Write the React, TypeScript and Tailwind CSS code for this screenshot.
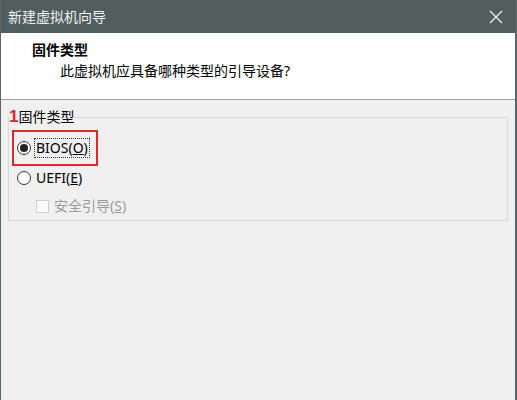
export default function App() {
  return (
    <div
      className="flex h-[400px] w-[517px] flex-col border-l border-r-2 border-[#5b6565] bg-[#f0f0f0] text-[14px] text-black"
      style={{ fontFamily: '"Noto Sans", "Noto Sans CJK SC", sans-serif' }}
    >
      {/* title bar */}
      <div className="flex h-[33px] shrink-0 items-center justify-between bg-[#525e5e] pl-[7px] pr-[12px] text-[#eef1f1]">
        <span className="leading-5">新建虚拟机向导</span>
        <svg width="14" height="14" viewBox="0 0 14 14" className="stroke-[#f4f6f6]">
          <path d="M1 1 L13 13 M13 1 L1 13" strokeWidth="1.2" fill="none" />
        </svg>
      </div>

      {/* header */}
      <div className="h-[67px] shrink-0 border-b border-[#a0a0a0] bg-white pl-[31px] pt-[7px]">
        <div className="font-bold leading-5">固件类型</div>
        <div className="mt-px pl-[28px] leading-5">此虚拟机应具备哪种类型的引导设备?</div>
      </div>

      {/* body */}
      <div className="px-[7px] pt-[7px]">
        <fieldset className="border border-[#d9d9d9] pb-[4px]">
          <legend className="leading-5">
            <span className="text-[17px] font-bold text-[#e0262e]" style={{ fontFamily: '"Liberation Sans", sans-serif' }}>1</span>
            固件类型
          </legend>

          <div className="ml-[3px] mt-[3px] flex h-[36px] w-[86px] items-center border-2 border-[#dd2a30] pl-[3px]">
            <Radio checked />
            <span className="ml-[3px] border border-dotted border-[#333] px-px leading-[18px]">
              BIOS(<u>O</u>)
            </span>
          </div>

          <div className="mt-[2px] flex h-[20px] items-center pl-[8px]">
            <Radio />
            <span className="ml-[5px] leading-5">
              UEFI(<u>E</u>)
            </span>
          </div>

          <div className="mt-[8px] flex h-[20px] items-center pl-[27px] text-[#9a9a9a]">
            <span className="h-[13px] w-[13px] border border-[#cfcfcf] bg-[#fafafa]" />
            <span className="ml-[5px] leading-5">
              安全引导(<u>S</u>)
            </span>
          </div>
        </fieldset>
      </div>
    </div>
  );
}

function Radio({ checked = false }: { checked?: boolean }) {
  return (
    <span className="flex h-[14px] w-[14px] shrink-0 items-center justify-center rounded-full border border-[#333] bg-white">
      {checked && <span className="h-[8px] w-[8px] rounded-full bg-[#222]" />}
    </span>
  );
}
